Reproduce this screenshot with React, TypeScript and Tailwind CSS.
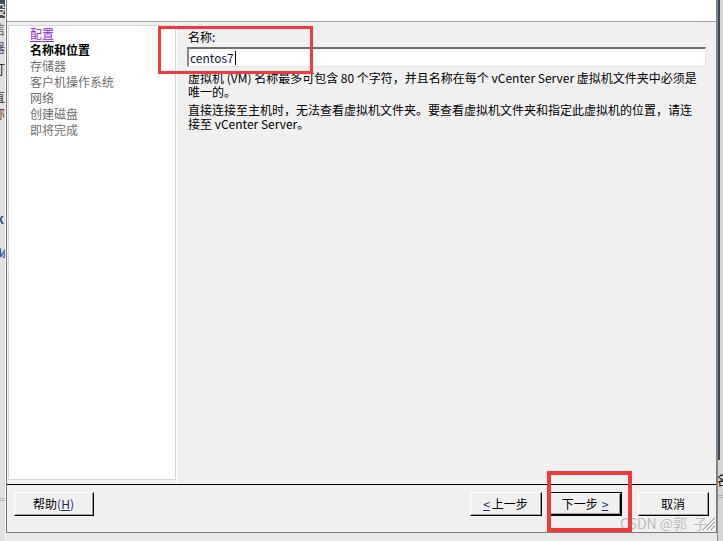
import React from "react";

function Btn({
  children,
  className,
  isDefault,
}: {
  children: React.ReactNode;
  className: string;
  isDefault?: boolean;
}) {
  const inner = (
    <div className="flex h-full w-full border-t border-l border-white border-b-black border-r-black border-b border-r">
      <div className="flex h-full w-full items-center justify-center border-b border-r border-[#a0a0a0] bg-[#f0f0f0] text-[12px] leading-[14px] text-black">
        {children}
      </div>
    </div>
  );
  return (
    <div className={`${className} h-[24px] ${isDefault ? "border border-black" : ""}`}>
      {inner}
    </div>
  );
}

export default function App() {
  return (
    <div className="relative flex h-[541px] w-[723px] overflow-hidden bg-[#e8e8e8] font-['Noto_Sans_CJK_SC','Noto_Sans',sans-serif] text-[12px] text-black">
      {/* background window on the left */}
      <div className="flex h-full w-[6px] shrink-0 flex-col overflow-hidden bg-[#e1e1e1] border-r border-[#f4f4f4]">
        <div className="h-[18px] shrink-0 overflow-hidden bg-[#3f4e60] text-[13px] leading-[18px] text-white">
          <span className="-ml-[7px] block">设</span>
        </div>
        <div className="-ml-[8px] mt-[4px] text-[13px] leading-[14px] text-[#6b4b3b]">信</div>
        <div className="-ml-[8px] mt-[4px] text-[13px] leading-[14px] text-[#5b4b6b]">器</div>
        <div className="-ml-[8px] mt-[8px] text-[13px] leading-[14px] text-[#333]">打</div>
        <div className="-ml-[8px] mt-[14px] text-[13px] leading-[14px] text-[#4a3a3a]">直</div>
        <div className="-ml-[8px] mt-[2px] text-[13px] leading-[14px] text-[#7a4a3a]">称</div>
        <div className="-ml-[3px] mt-[2px] text-[11px] leading-[10px] text-[#7a5a3a]">'</div>
        <div className="-ml-[4px] mt-[80px] text-[13px] font-bold leading-[14px] text-[#2a4d8f]">k</div>
        <div className="-ml-[5px] mt-[20px] text-[13px] font-bold italic leading-[14px] text-[#2a5aa0]">M</div>
        <div className="mt-auto mb-[40px] h-[3px] border-y border-[#bdbdbd]" />
      </div>

      {/* dialog */}
      <div className="flex h-[533px] w-[711px] shrink-0 flex-col border-x border-b border-[#7c7c7c] bg-[#f0f0f0]">
        <div className="h-[22px] shrink-0 border-b border-[#a0a0a0] bg-white" />
        <div className="flex min-h-0 flex-1">
          {/* left nav */}
          <div className="mb-[4px] ml-px mt-[3px] w-[168px] shrink-0 border border-[#d6d6d6] bg-white pl-[21px] leading-[16px]">
            <div className="text-[#8a2be2] underline underline-offset-2">配置</div>
            <div className="font-bold text-black">名称和位置</div>
            <div className="text-[#6e6e6e]">存储器</div>
            <div className="text-[#6e6e6e]">客户机操作系统</div>
            <div className="text-[#6e6e6e]">网络</div>
            <div className="text-[#6e6e6e]">创建磁盘</div>
            <div className="text-[#6e6e6e]">即将完成</div>
          </div>
          {/* content */}
          <div className="flex-1 border-l border-white pl-[10px] pt-[8px]">
            <div className="pl-px leading-[14px]">名称:</div>
            <div className="mt-[3px] flex h-[20px] w-[519px] items-center border-t-2 border-l-2 border-t-[#6f6f6f] border-l-[#8a8a8a] border-b border-r border-b-[#e3e3e3] border-r-[#e3e3e3] bg-white pl-[1px]">
              <span className="leading-[14px] text-[#101a3a]">centos7</span>
              <span className="ml-px h-[14px] w-px bg-black" />
            </div>
            <div className="mt-[4px] whitespace-nowrap pl-px leading-[14px]">
              虚拟机 (VM) 名称最多可包含 80 个字符，并且名称在每个 vCenter Server 虚拟机文件夹中必须是
              <br />
              唯一的。
            </div>
            <div className="mt-[4px] whitespace-nowrap pl-px leading-[14px]">
              直接连接至主机时，无法查看虚拟机文件夹。要查看虚拟机文件夹和指定此虚拟机的位置，请连
              <br />
              接至 vCenter Server。
            </div>
          </div>
        </div>
        <div className="h-px shrink-0 bg-black" />
        <div className="flex h-[47px] shrink-0 items-start pl-[7px] pr-[7px] pt-[7px]">
          <Btn className="w-[80px]">
            帮助<span className="text-[#1b2a5c]">(<span className="underline">H</span>)</span>
          </Btn>
          <div className="ml-auto flex">
            <Btn className="w-[72px]">
              <span className="text-[#1b2a5c] underline">&lt;</span>
              <span className="ml-[2px]">上一步</span>
            </Btn>
            <Btn className="ml-[7px] w-[73px]" isDefault>
              <span>下一步</span>
              <span className="ml-[4px] text-[#1b2a5c] underline">&gt;</span>
            </Btn>
            <Btn className="ml-[16px] w-[71px]">取消</Btn>
          </div>
        </div>
      </div>

      {/* background window on the right */}
      <div className="flex h-full w-[6px] shrink-0 flex-col overflow-hidden border-l border-[#8a8a8a] bg-[#d6d6d6]">
        <div className="h-[460px] w-[2px] shrink-0 bg-[#3a4a5c]" />
        <div className="-ml-[2px] mt-[13px] text-[13px] leading-[14px] text-[#222]">名</div>
        <div className="mt-[8px] h-[3px] border-y border-[#b0b0b0]" />
      </div>

      {/* watermark */}
      <div className="pointer-events-none absolute left-[620px] top-[515px] whitespace-nowrap text-[14px] leading-[16px] text-[#b9b9b9] [text-shadow:0_0_1px_#ffffff]">
        CSDN @郭&nbsp;&nbsp;子
      </div>
      {/* resize grip */}
      <svg className="absolute left-[701px] top-[516px]" width="15" height="15" viewBox="0 0 15 15">
        <path d="M14 2 L2 14 M14 6 L6 14 M14 10 L10 14" stroke="#9a9a9a" strokeWidth="1.2" />
        <path d="M14 3 L3 14 M14 7 L7 14 M14 11 L11 14" stroke="#ffffff" strokeWidth="1" />
      </svg>

      {/* annotations */}
      <div className="pointer-events-none absolute left-[158px] top-[26px] h-[48px] w-[155px] border-[3px] border-[#f23a3a]" />
      <div className="pointer-events-none absolute left-[547px] top-[471px] h-[61px] w-[85px] border-[4px] border-[#f23a3a]" />
    </div>
  );
}
